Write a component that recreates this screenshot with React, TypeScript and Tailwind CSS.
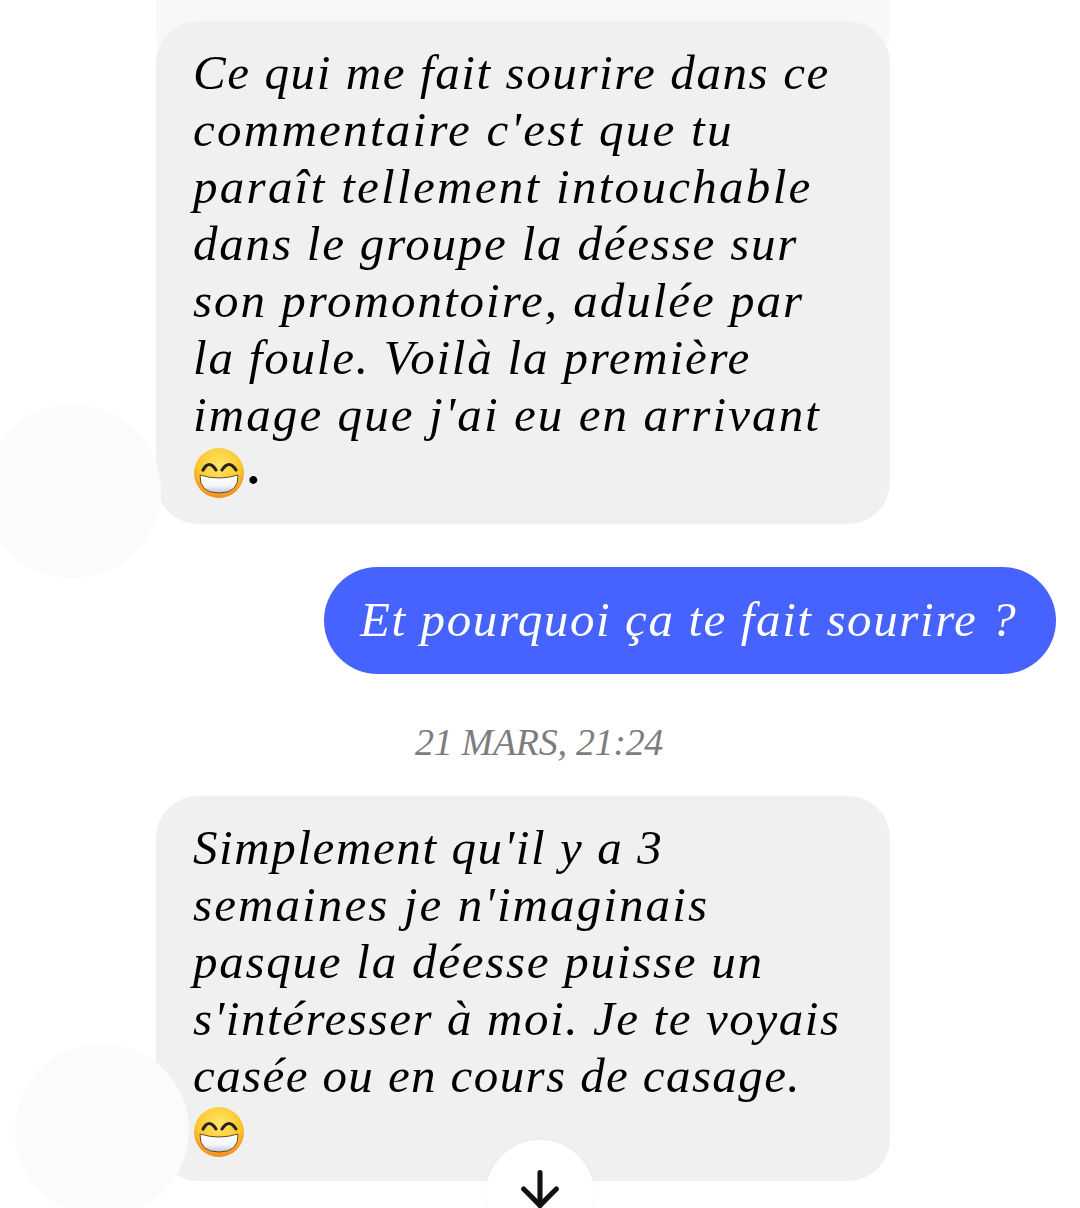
import type { ReactNode } from "react";
import { ArrowDown } from "lucide-react";

function GrinEmoji() {
  return (
    <svg width="50" height="50" viewBox="0 0 50 50" className="ml-[1px] block shrink-0">
      <defs>
        <radialGradient id="grinFace" cx="50%" cy="34%" r="68%">
          <stop offset="0%" stopColor="#ffe766" />
          <stop offset="65%" stopColor="#fcc62f" />
          <stop offset="100%" stopColor="#f5821c" />
        </radialGradient>
        <linearGradient id="grinTeeth" x1="0" y1="0" x2="0" y2="1">
          <stop offset="0%" stopColor="#ffffff" />
          <stop offset="60%" stopColor="#f4f6fb" />
          <stop offset="100%" stopColor="#b9c6de" />
        </linearGradient>
      </defs>
      <circle cx="25" cy="25" r="25" fill="url(#grinFace)" />
      <path d="M9 22 Q15 11 22 22" fill="none" stroke="#2a2320" strokeWidth="3.2" strokeLinecap="round" />
      <path d="M28 22 Q35 11 42 22" fill="none" stroke="#2a2320" strokeWidth="3.2" strokeLinecap="round" />
      <path d="M6 27 Q25 33 44 27 Q45 45 25 45 Q5 45 6 27 Z" fill="url(#grinTeeth)" stroke="#6b4a1a" strokeWidth="1" />
    </svg>
  );
}

interface BubbleLine {
  text: string;
  tracking: string;
}

function Bubble({ lines, children }: { lines: BubbleLine[]; children: ReactNode }) {
  return (
    <div className="w-[734px] rounded-[42px] bg-[#f0f0f0] pl-[37px] pt-[23px] text-black">
      {lines.map((line) => (
        <p key={line.text} className={`h-[57px] whitespace-nowrap text-[49px] leading-[57px] ${line.tracking}`}>
          {line.text}
        </p>
      ))}
      {children}
    </div>
  );
}

const firstLines: BubbleLine[] = [
  { text: "Ce qui me fait sourire dans ce", tracking: "tracking-[1.6px]" },
  { text: "commentaire c'est que tu", tracking: "tracking-[2.27px]" },
  { text: "paraît tellement intouchable", tracking: "tracking-[2.3px]" },
  { text: "dans le groupe la déesse sur", tracking: "tracking-[1.8px]" },
  { text: "son promontoire, adulée par", tracking: "tracking-[2px]" },
  { text: "la foule. Voilà la première", tracking: "tracking-[1.8px]" },
  { text: "image que j'ai eu en arrivant", tracking: "tracking-[2.1px]" },
];

const secondLines: BubbleLine[] = [
  { text: "Simplement qu'il y a 3", tracking: "tracking-[1.6px]" },
  { text: "semaines je n'imaginais", tracking: "tracking-[2.1px]" },
  { text: "pasque la déesse puisse un", tracking: "tracking-[1.75px]" },
  { text: "s'intéresser à moi. Je te voyais", tracking: "tracking-[1.6px]" },
  { text: "casée ou en cours de casage.", tracking: "tracking-[1.4px]" },
];

export default function App() {
  return (
    <div className="relative h-[1208px] w-[1080px] overflow-hidden bg-white font-['Liberation_Serif',serif] italic">
      <div className="absolute left-[-16px] top-[405px] z-10 h-[173px] w-[177px] rounded-full bg-[#fbfbfb]" />
      <div className="absolute left-[15px] top-[1044px] z-10 h-[172px] w-[174px] rounded-full bg-[#fbfbfb]" />

      <div className="flex flex-col gap-[43px] pl-[156px] pr-[24px]">
        <div>
          <div className="-mb-[29px] h-[50px] w-[734px] rounded-b-[14px] bg-[#f8f8f8]" />
          <Bubble lines={firstLines}>
            <div className="flex items-start gap-[5px] pb-[26px] pt-[5px]">
              <GrinEmoji />
              <span className="text-[49px] font-bold leading-[40px]">.</span>
            </div>
          </Bubble>
        </div>

        <div className="flex h-[107px] w-[732px] items-center self-end whitespace-nowrap rounded-full bg-[#4763ff] pb-[2px] pl-[36px] text-[49px] tracking-[1.6px] text-white">
          Et pourquoi ça te fait sourire ?
        </div>

        <div className="h-[36px] pl-[259px] text-[38px] leading-[50px] tracking-[-0.3px] text-[#7d7d7d]">
          21 MARS, 21:24
        </div>

        <Bubble lines={secondLines}>
          <div className="pb-[24px] pt-[3px]">
            <GrinEmoji />
          </div>
        </Bubble>
      </div>

      <div className="absolute left-[486px] top-[1140px] z-20 flex h-[108px] w-[108px] justify-center rounded-full bg-white pt-[21px] shadow-[0_0_4px_rgba(0,0,0,0.04)]">
        <ArrowDown size={56} strokeWidth={2.2} color="#111" />
      </div>
    </div>
  );
}
